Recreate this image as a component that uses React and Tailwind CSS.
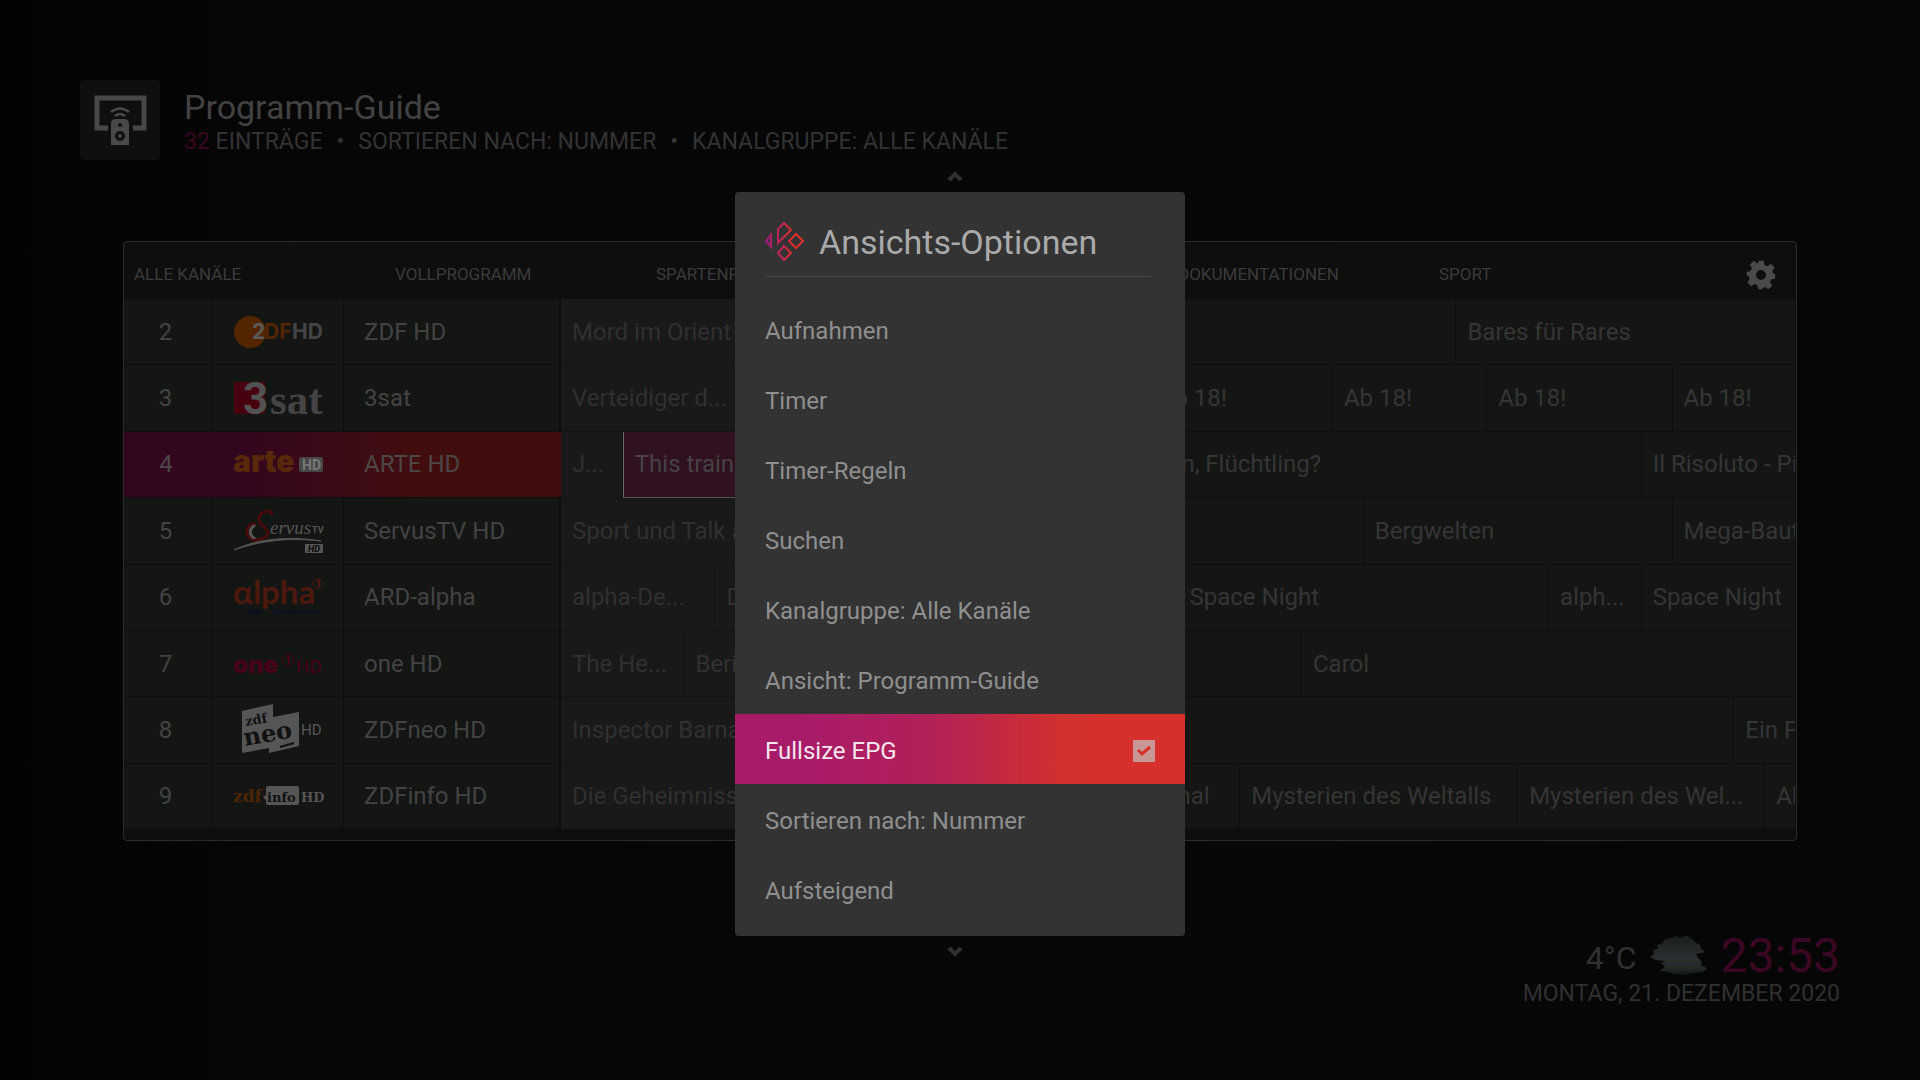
import React from "react";

const menuItems = [
  "Aufnahmen",
  "Timer",
  "Timer-Regeln",
  "Suchen",
  "Kanalgruppe: Alle Kanäle",
  "Ansicht: Programm-Guide",
  { label: "Fullsize EPG", checked: true },
  "Sortieren nach: Nummer",
  "Aufsteigend",
];

const groups = [
  "Alle Kanäle",
  "Vollprogramm",
  "Spartenprogramm",
  "Kinder",
  "Dokumentationen",
  "Sport",
];

// span is counted in five minute slots, every row adds up to 40
const channels = [
  {
    number: 2,
    name: "ZDF HD",
    logo: <ZdfLogo />,
    shows: [
      { title: "Mord im Orient Express", span: 14, past: true },
      { title: "", span: 15 },
      { title: "Bares für Rares", span: 11 },
    ],
  },
  {
    number: 3,
    name: "3sat",
    logo: <DreisatLogo />,
    shows: [
      { title: "Verteidiger d...", span: 6, past: true },
      { title: "", span: 13 },
      { title: "Ab 18!", span: 6 },
      { title: "Ab 18!", span: 5 },
      { title: "Ab 18!", span: 6 },
      { title: "Ab 18!", span: 4 },
    ],
  },
  {
    number: 4,
    name: "ARTE HD",
    logo: <ArteLogo />,
    active: true,
    shows: [
      { title: "J...", span: 2, past: true },
      { title: "This train", span: 16, focused: true },
      { title: "Wohin, Flüchtling?", span: 17 },
      { title: "Il Risoluto - Piccolo", span: 5 },
    ],
  },
  {
    number: 5,
    name: "ServusTV HD",
    logo: <ServusLogo />,
    shows: [
      { title: "Sport und Talk aus", span: 14, past: true },
      { title: "", span: 12 },
      { title: "Bergwelten", span: 10 },
      { title: "Mega-Bauten", span: 4 },
    ],
  },
  {
    number: 6,
    name: "ARD-alpha",
    logo: <AlphaLogo />,
    shows: [
      { title: "alpha-De...", span: 5, past: true },
      { title: "Die", span: 15, past: true },
      { title: "Space Night", span: 12 },
      { title: "alph...", span: 3 },
      { title: "Space Night", span: 5 },
    ],
  },
  {
    number: 7,
    name: "one HD",
    logo: <OneLogo />,
    shows: [
      { title: "The He...", span: 4, past: true },
      { title: "Bericht", span: 12, past: true },
      { title: "", span: 8 },
      { title: "Carol", span: 16 },
    ],
  },
  {
    number: 8,
    name: "ZDFneo HD",
    logo: <NeoLogo />,
    shows: [
      { title: "Inspector Barnaby", span: 14, past: true },
      { title: "", span: 24 },
      { title: "Ein Paar", span: 2 },
    ],
  },
  {
    number: 9,
    name: "ZDFinfo HD",
    logo: <InfoLogo />,
    shows: [
      { title: "Die Geheimnisse", span: 14, past: true },
      { title: "", span: 4 },
      { title: "Original", span: 4 },
      { title: "Mysterien des Weltalls", span: 9 },
      { title: "Mysterien des Wel...", span: 8 },
      { title: "Alle", span: 1 },
    ],
  },
];

function LogoFrame({ children }) {
  return (
    <svg viewBox="0 0 90 64" className="block mx-auto w-[90px] h-16" aria-hidden="true">
      {children}
    </svg>
  );
}

function ZdfLogo() {
  return (
    <LogoFrame>
      <circle cx="16" cy="32" r="16" fill="#542600" />
      <g fontFamily="Inter, sans-serif" fontWeight="700" fontSize="21">
        <text x="18" y="39" fill="#5a5a5a">2</text>
        <text x="30" y="39" fill="#542600">DF</text>
        <text x="58" y="39" fill="#444444">HD</text>
      </g>
    </LogoFrame>
  );
}

function DreisatLogo() {
  return (
    <LogoFrame>
      <rect x="0" y="16" width="31" height="32" fill="#48000f" />
      <text x="9" y="48" fontFamily="'Liberation Sans Narrow', Roboto, sans-serif" fontWeight="700" fontSize="44" fill="#525252">3</text>
      <text x="36" y="48" fontFamily="'Liberation Serif', serif" fontWeight="700" fontSize="43" fill="#444444">sat</text>
    </LogoFrame>
  );
}

function ArteLogo() {
  return (
    <LogoFrame>
      <text x="-1" y="40" fontFamily="Inter, sans-serif" fontWeight="900" fontSize="30" fill="#57290a">arte</text>
      <rect x="65" y="25" width="24" height="15" rx="2" fill="#474747" />
      <text x="68" y="38" fontFamily="Roboto, sans-serif" fontWeight="700" fontSize="14" fill="#777777">HD</text>
    </LogoFrame>
  );
}

function ServusLogo() {
  return (
    <LogoFrame>
      <g fill="none" strokeLinecap="round">
        <path d="M38 15C37 10 25 12 25 20C25 27 34 28 34 34C33 42 13 45 13 33C13 28 16 25 21 25" stroke="#480b0c" strokeWidth="3" />
        <path d="M20 27C15 30 15 36 20 39" stroke="#555555" strokeWidth="3" />
        <path d="M0 51C20 41 52 36 87 42C54 38 25 42 0 51Z" fill="#555555" stroke="#555555" strokeWidth="1" />
      </g>
      <text x="36" y="35" fontFamily="'Liberation Serif', serif" fontStyle="italic" fontSize="19" fill="#555555">ervus</text>
      <text x="78" y="34" fontFamily="Roboto, sans-serif" fontWeight="700" fontSize="9" fill="#555555">TV</text>
      <rect x="71" y="45" width="18" height="9" fill="#555555" />
      <text x="74" y="53" fontFamily="Roboto, sans-serif" fontWeight="700" fontStyle="italic" fontSize="9" fill="#060606">HD</text>
    </LogoFrame>
  );
}

function AlphaLogo() {
  return (
    <LogoFrame>
      <text x="-1" y="39" fontFamily="Lato, sans-serif" fontWeight="700" fontSize="33" fill="#4d180d">αlpha</text>
      <circle cx="84" cy="19" r="5" fill="none" stroke="#4d180d" />
      <path d="M83 17L85 16V22" fill="none" stroke="#4d180d" strokeWidth="2" />
      <g fontFamily="Roboto, sans-serif" fontSize="8" fill="#050e24">
        <text x="13" y="49" fontWeight="700">ARD</text>
        <text x="38" y="49">Bildungskanal</text>
      </g>
    </LogoFrame>
  );
}

function OneLogo() {
  return (
    <LogoFrame>
      <text x="-1" y="41" fontFamily="Inter, sans-serif" fontWeight="900" fontSize="24" fill="#48001a">one</text>
      <circle cx="54" cy="28" r="6" fill="none" stroke="#48001a" />
      <path d="M52 27L55 25V32" fill="none" stroke="#48001a" strokeWidth="2" />
      <text x="62" y="41" fontFamily="Roboto, sans-serif" fontWeight="400" fontSize="19" fill="#48001a">HD</text>
    </LogoFrame>
  );
}

function NeoLogo() {
  return (
    <LogoFrame>
      <path d="M8 13L39 6V19L65 14V48L35 55V50L8 55Z" fill="#555555" />
      <g fontFamily="'DejaVu Serif', serif" fontWeight="700" fill="#111111">
        <text x="12" y="28" fontSize="13" transform="rotate(-10 12 28)">zdf</text>
        <text x="11" y="48" fontSize="24" transform="rotate(-10 11 48)">neo</text>
      </g>
      <path d="M46 49L60 45" stroke="#111111" strokeWidth="2" />
      <text x="67" y="37" fontFamily="Roboto, sans-serif" fontSize="15" fill="#555555">HD</text>
    </LogoFrame>
  );
}

function InfoLogo() {
  return (
    <LogoFrame>
      <g fontFamily="'DejaVu Serif', serif" fontWeight="700">
        <text x="-1" y="38" fontSize="17" fill="#4f2600">zdf</text>
        <path d="M34 22H63Q65 22 65 24V39Q65 41 63 41H34Q32 41 32 39V36L29 33L32 31V24Q32 22 34 22Z" fill="#555555" />
        <text x="33" y="38" fontSize="13" fill="#111111">info</text>
        <text x="67" y="38" fontSize="13" fill="#555555">HD</text>
      </g>
    </LogoFrame>
  );
}

const GuideIcon = () => (
  <svg viewBox="0 0 80 80" className="block w-20 h-20 rounded bg-[#0f0f0f]" aria-hidden="true">
    <path d="M28 48H17V18H64V48H53" fill="none" stroke="#484848" strokeWidth="5" />
    <path
      fillRule="evenodd"
      fill="#484848"
      d="M31 65V44Q31 39 36 39H44Q49 39 49 44V65ZM40 43a2 2 0 1 0 0 4a2 2 0 1 0 0-4ZM40 51a5 5 0 1 0 0 10a5 5 0 1 0 0-10ZM40 54a2 2 0 1 1 0 4a2 2 0 1 1 0-4Z"
    />
    <path d="M31 32Q40 25 49 32M35 36Q40 32 45 36" fill="none" stroke="#484848" strokeWidth="2.500" />
  </svg>
);

const KodiIcon = () => (
  <svg viewBox="0 0 40 40" className="w-10 h-10" aria-hidden="true">
    <defs>
      <linearGradient id="kodi" gradientUnits="userSpaceOnUse" x1="0" y1="0" x2="40" y2="0">
        <stop offset="0.1" stopColor="#a81b78" />
        <stop offset="0.7" stopColor="#dc2f2a" />
      </linearGradient>
    </defs>
    <g fill="none" stroke="url(#kodi)" strokeWidth="2">
      <path d="M6 13V25L1 19Z" />
      <path d="M13 7L19 1L26 8L13 21Z" />
      <path d="M31 12L38 19L31 26L24 19Z" />
      <path d="M19 24L26 31L19 38L13 31Z" />
    </g>
  </svg>
);

const GearIcon = () => (
  <svg viewBox="0 0 24 24" className="w-[34px] h-[34px]" fill="#4a4a4a" aria-hidden="true">
    <path
      fillRule="evenodd"
      d="M10 2h4l.5 3 2 .9 2.500-1.800 2.600 2.700-1.700 2.500.7 1.700 1.400.5v3l-2.800.6-.9 2 1.700 2.500-2.900 2.500-2-1.600-2.400.8L14 22h-4l-.6-2.800-1.900-.9-2.500 1.700-2.600-2.800 1.700-2.400-.8-2L2 12.500V9.800l2.800-.8.800-1.900L4 4.800 6.900 2l2.400 1.700.6.100ZM12 8.500a3.500 3.500 0 1 0 0 7a3.500 3.500 0 1 0 0-7Z"
    />
  </svg>
);

const CloudIcon = () => (
  <svg viewBox="0 0 60 42" className="w-[60px] h-[42px]" aria-hidden="true">
    <defs>
      <linearGradient id="cloud" x1="0" y1="0" x2="0" y2="1">
        <stop offset="0" stopColor="#1a1d1e" />
        <stop offset="0.6" stopColor="#2b2f30" />
        <stop offset="0.85" stopColor="#232829" />
        <stop offset="1" stopColor="#0e1518" />
      </linearGradient>
      <filter id="soft">
        <feGaussianBlur stdDeviation="0.6" />
      </filter>
    </defs>
    <path
      fill="url(#cloud)"
      filter="url(#soft)"
      d="M2 23L6 20L5 17L10 14L9 11L15 9L17 5L23 4L27 2L33 4L38 1L43 4L47 8L52 11L53 15L57 18L48 20L50 24L54 28L53 31L59 34L55 38L44 39L38 41L26 40L20 38L11 37L17 33L13 29L17 27L8 26Z"
    />
  </svg>
);

const Arrow = ({ down }) => (
  <svg viewBox="0 0 16 12" className={down ? "w-4 h-3 rotate-180" : "w-4 h-3"} aria-hidden="true">
    <path d="M2 10L8 4L14 10" fill="none" stroke="#303030" strokeWidth="4" />
  </svg>
);

const showStyle = (show) => {
  if (show.focused)
    return "bg-[#2f1120] text-[#464146] border-l border-b border-l-[#6b6b6b] border-b-[#555555]";
  if (show.past) return "bg-[#191919] text-[#303030] border-r border-b border-[#121212]";
  return "bg-[#141614] text-[#353535] border-r border-b border-[#0c0d0c]";
};

const Guide = () => (
  <main className="mx-[123px] mt-[81px] rounded border border-[#2c2c2c] bg-[#0e0e0e] pb-2.5 overflow-hidden">
    <nav className="flex items-center h-[57px] pt-2 pr-[18px]">
      <div className="flex flex-1">
        {groups.map((group) => (
          <button key={group} className="w-[261px] pl-2.5 text-left text-[17px] uppercase text-[#3b3b3b]">
            {group}
          </button>
        ))}
      </div>
      <button aria-label="Einstellungen">
        <GearIcon />
      </button>
    </nav>
    <table className="w-full h-[531px] table-fixed border-separate border-spacing-0 text-2xl">
      <colgroup>
        <col className="w-[88px]" />
        <col className="w-[132px]" />
        <col className="w-[217px]" />
        <col span="40" />
      </colgroup>
      <tbody>
        {channels.map((channel) => (
          <tr
            key={channel.number}
            className={
              channel.active
                ? "bg-[linear-gradient(90deg,#33061f_0,#33061f_110px,#420e0d_300px)] text-[#4c4648]"
                : "bg-[#141614] text-[#424342]"
            }
          >
            <td className={`p-0 pr-1 text-center border-b border-[#0c0d0c] ${channel.active ? "" : "border-r"}`}>
              {channel.number}
            </td>
            <td className={`p-0 pl-0.5 border-b border-[#0c0d0c] ${channel.active ? "" : "border-r"}`}>
              {channel.logo}
            </td>
            <th
              scope="row"
              className={`p-0 pl-5 text-left font-normal border-b border-[#0c0d0c] ${channel.active ? "" : "border-r-2"}`}
            >
              {channel.name}
            </th>
            {channel.shows.map((show, i) => (
              <td
                key={i}
                colSpan={show.span}
                className={`p-0 pl-[11px] overflow-hidden whitespace-nowrap ${showStyle(show)}`}
              >
                {show.title}
              </td>
            ))}
          </tr>
        ))}
      </tbody>
    </table>
  </main>
);

const itemStyle = "flex items-center justify-between w-full h-[70px] pt-1 px-[30px] text-left text-2xl";

const OptionsDialog = () => (
  <div className="absolute inset-0 flex flex-col items-center gap-2.5 pt-[170px]">
    <div className="pr-2.5">
      <Arrow />
    </div>
    <div role="dialog" aria-labelledby="options-title" className="w-[450px] rounded bg-[#333333] pb-3">
      <div className="ml-[30px] mr-[34px] flex items-center gap-[14px] h-[85px] pt-4 border-b border-[#474747]">
        <KodiIcon />
        <h2 id="options-title" className="text-[34px] text-[#aaaaaa]">
          Ansichts-Optionen
        </h2>
      </div>
      <div className="pt-[17px]">
        {menuItems.map((item) =>
          item.checked ? (
            <label
              key={item.label}
              className={`${itemStyle} text-[#f5e6ee] bg-[linear-gradient(90deg,#a81b69_15%,#b32058_43%,#d0302f_72%,#d5302b_85%)]`}
            >
              {item.label}
              <span className="relative flex">
                <input type="checkbox" defaultChecked className="appearance-none w-[22px] h-[22px] bg-[#c89694]" />
                <svg viewBox="0 0 22 22" className="absolute inset-0" aria-hidden="true">
                  <path d="M5 10L9 14L17 7" fill="none" stroke="#d5302b" strokeWidth="3" />
                </svg>
              </span>
            </label>
          ) : (
            <button key={item} className={`${itemStyle} text-[#8f8f8f]`}>
              {item}
            </button>
          )
        )}
      </div>
    </div>
    <div className="pr-2.5">
      <Arrow down />
    </div>
  </div>
);

const App = () => {
  return (
    <div className="relative flex flex-col min-h-screen overflow-hidden bg-[linear-gradient(90deg,#030303,#060606_15%,#070707_60%,#060606)] font-[Roboto,sans-serif]">
      <header className="flex gap-6 px-20 pt-20">
        <GuideIcon />
        <div className="pt-1">
          <h1 className="text-[34px] leading-[46px] text-[#424242]">Programm-Guide</h1>
          <p className="flex gap-3.5 text-[23px] leading-6 uppercase text-[#333333]">
            <span>
              <span className="text-[#3a0724]">32</span> Einträge
            </span>
            <span>•</span>
            <span>Sortieren nach: Nummer</span>
            <span>•</span>
            <span>Kanalgruppe: Alle Kanäle</span>
          </p>
        </div>
      </header>

      <Guide />

      <footer className="mt-auto flex flex-col items-end px-20 pb-[68px]">
        <div className="flex items-end gap-3 text-[#303030]">
          <span className="text-[32px] leading-9">4°C</span>
          <CloudIcon />
          <time className="text-5xl leading-10 text-[#3a0724]">23:53</time>
        </div>
        <p className="text-[23px] leading-9 uppercase text-[#303030]">Montag, 21. Dezember 2020</p>
      </footer>

      <OptionsDialog />
    </div>
  );
};

export default App;
